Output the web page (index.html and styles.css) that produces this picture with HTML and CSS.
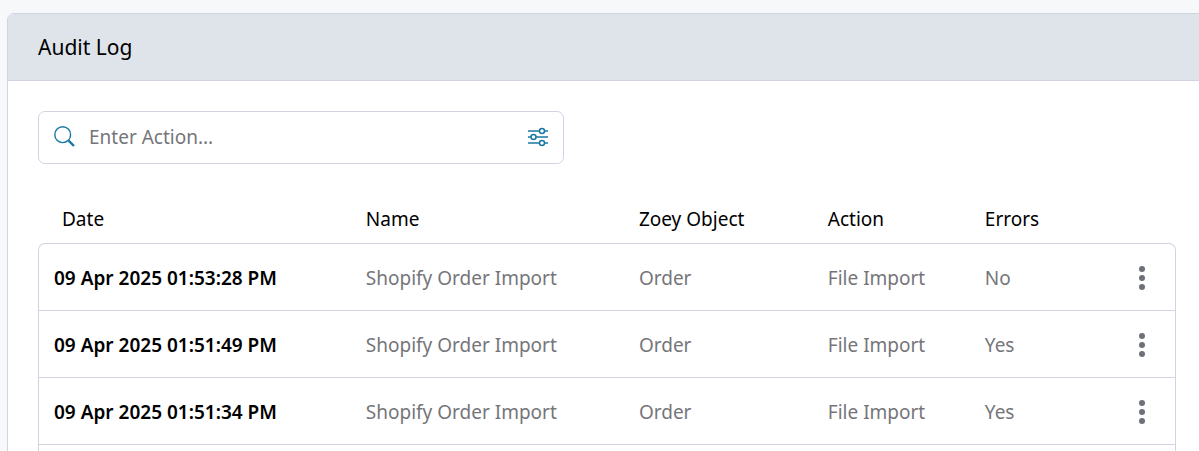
FILE: index.html
```html
<!DOCTYPE html>
<html lang="en">
<head>
  <meta charset="UTF-8" />
  <meta name="viewport" content="width=device-width, initial-scale=1.0"/>
  <title>Audit Log</title>
  <link rel="stylesheet" href="styles.css">
</head>
<body>
  <svg class="hidden">
    <symbol id="dots" viewBox="0 0 8 26">
      <circle cx="4" cy="4" r="3" />
      <circle cx="4" cy="13" r="3" />
      <circle cx="4" cy="22" r="3" />
    </symbol>
  </svg>

  <main class="card">
    <header class="card-header">
      <h1>Audit Log</h1>
    </header>

    <div class="card-body">
      <form class="search">
        <svg class="search-icon" viewBox="0 0 22 22" aria-hidden="true">
          <circle cx="8.7" cy="8.7" r="7.9" stroke-width="1.4" />
          <path d="M14.6 14.6L20 20" stroke-width="2.4" />
        </svg>
        <input type="text" id="action" placeholder="Enter Action..." aria-label="Enter Action" />
        <button type="button" class="filter-btn" aria-label="Filters">
          <svg viewBox="0 0 22 20" aria-hidden="true">
            <path d="M1 4h11.5M17.5 4H21M1 10h3M9 10h12M1 16h11.5M17.5 16H21" />
            <circle cx="15" cy="4" r="2.5" />
            <circle cx="6.5" cy="10" r="2.5" />
            <circle cx="15" cy="16" r="2.5" />
          </svg>
        </button>
      </form>

      <table class="log">
        <thead>
          <tr>
            <th class="col-date">Date</th>
            <th class="col-name">Name</th>
            <th class="col-object">Zoey Object</th>
            <th class="col-action">Action</th>
            <th class="col-errors">Errors</th>
            <th class="col-menu"></th>
          </tr>
        </thead>
        <tbody>
          <tr>
            <td class="date">09 Apr 2025 01:53:28 PM</td>
            <td>Shopify Order Import</td>
            <td>Order</td>
            <td>File Import</td>
            <td>No</td>
            <td class="menu"><button type="button" aria-label="Row actions"><svg><use href="#dots" /></svg></button></td>
          </tr>
          <tr>
            <td class="date">09 Apr 2025 01:51:49 PM</td>
            <td>Shopify Order Import</td>
            <td>Order</td>
            <td>File Import</td>
            <td>Yes</td>
            <td class="menu"><button type="button" aria-label="Row actions"><svg><use href="#dots" /></svg></button></td>
          </tr>
          <tr>
            <td class="date">09 Apr 2025 01:51:34 PM</td>
            <td>Shopify Order Import</td>
            <td>Order</td>
            <td>File Import</td>
            <td>Yes</td>
            <td class="menu"><button type="button" aria-label="Row actions"><svg><use href="#dots" /></svg></button></td>
          </tr>
          <tr>
            <td></td>
            <td></td>
            <td></td>
            <td></td>
            <td></td>
            <td></td>
          </tr>
        </tbody>
      </table>
    </div>
  </main>
</body>
</html>
```
FILE: styles.css
```css
* {
  box-sizing: border-box;
}
html, body {
  height: 100%;
  overflow: hidden;
}
body {
  margin: 0;
  background: #f7f8fa;
  color: #000;
  font-family: "Noto Sans", sans-serif;
  font-size: 19px;
  line-height: 26px;
}
.hidden {
  display: none;
}
.card {
  margin: 13px -8px 0 7px;
  background: #fff;
  border: 1px solid #d0d3e2;
  border-radius: 7px;
  overflow: hidden;
}
.card-header {
  padding: 20px 30px;
  background: #dee4ea;
  border-bottom: 1px solid #d0d3e2;
}
h1 {
  margin: 0;
  font-size: 21px;
  font-weight: 400;
  line-height: 26px;
}
.card-body {
  padding: 30px;
}
.search {
  display: flex;
  align-items: center;
  width: 46.2%;
  height: 53px;
  padding: 0 14px 2px 15px;
  border: 1px solid #d0d3e2;
  border-radius: 7px;
}
.search svg {
  fill: none;
  stroke: #1878a0;
}
.search-icon {
  width: 22px;
  height: 22px;
}
.search input {
  flex: 1;
  min-width: 0;
  padding: 0 13px;
  border: 0;
  outline: 0;
  background: none;
  font: inherit;
}
.search input::placeholder {
  color: #75757a;
}
button {
  padding: 0;
  border: 0;
  background: none;
  cursor: pointer;
}
.filter-btn svg {
  display: block;
  width: 22px;
  height: 20px;
  stroke-width: 1.5;
}
.log {
  width: 100%;
  margin-top: 31px;
  table-layout: fixed;
  border-collapse: separate;
  border-spacing: 0;
}
.log th {
  height: 48px;
  padding: 0 16px;
  font-weight: 400;
  text-align: left;
}
.log th.col-date {
  width: 27.4%;
  padding-left: 24px;
}
.col-name {
  width: 24%;
}
.col-object {
  width: 16.6%;
}
.col-action {
  width: 13.8%;
}
.col-errors {
  width: 12.3%;
}
.log td {
  height: 67px;
  padding: 2px 16px 0;
  border-bottom: 1px solid #d0d3e2;
  color: #75757a;
}
.log td:first-child {
  padding-left: 15px;
  border-left: 1px solid #d0d3e2;
}
.log td:last-child {
  border-right: 1px solid #d0d3e2;
}
.log tr:first-child td {
  height: 68px;
  border-top: 1px solid #d0d3e2;
}
.log tr:first-child td:first-child {
  border-top-left-radius: 7px;
}
.log tr:first-child td:last-child {
  border-top-right-radius: 7px;
}
.log td.date {
  color: #000;
  font-weight: 600;
}
.log td.menu {
  padding-top: 0;
  text-align: center;
}
.menu button {
  vertical-align: middle;
}
.menu svg {
  display: block;
  width: 8px;
  height: 26px;
  fill: #6c7078;
}
```
